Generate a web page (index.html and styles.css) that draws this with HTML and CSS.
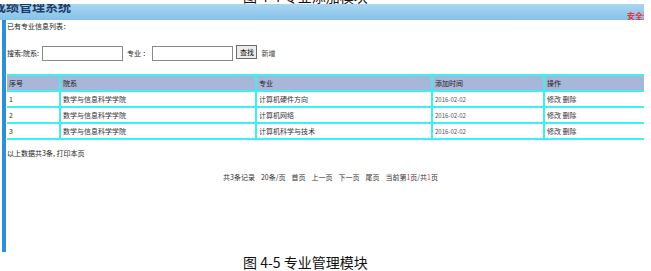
FILE: index.html
```html
<!DOCTYPE html>
<html>
<head>
<meta charset="utf-8">
<title>专业管理模块</title>
<link rel="stylesheet" href="styles.css">
</head>
<body>
  <div class="prev-caption"><div class="prev-text">图 4-4 专业添加模块</div></div>

  <div class="shot">
    <div class="topbar">
      <span class="sys-name">成绩管理系统</span>
      <span class="logout">安全退出</span>
    </div>
    <div class="main">
      <div class="list-title">已有专业信息列表：</div>

      <form class="search">
        <span>搜索:院系:</span>
        <input type="text" class="box">
        <span class="lbl">专业 ：</span>
        <input type="text" class="box">
        <button type="button" class="btn">查找</button>
        <span class="add">新增</span>
      </form>

      <table class="grid">
        <tr class="head">
          <td class="c1">序号</td>
          <td class="c2">院系</td>
          <td class="c3">专业</td>
          <td class="c4">添加时间</td>
          <td class="c5">操作</td>
        </tr>
        <tr>
          <td>1</td>
          <td>数学与信息科学学院</td>
          <td>计算机硬件方向</td>
          <td class="date">2016-02-02</td>
          <td>修改 删除</td>
        </tr>
        <tr>
          <td>2</td>
          <td>数学与信息科学学院</td>
          <td>计算机网络</td>
          <td class="date">2016-02-02</td>
          <td>修改 删除</td>
        </tr>
        <tr>
          <td>3</td>
          <td>数学与信息科学学院</td>
          <td>计算机科学与技术</td>
          <td class="date">2016-02-02</td>
          <td>修改 删除</td>
        </tr>
      </table>

      <div class="summary">以上数据共3条, 打印本页</div>

      <div class="pager">
        <span>共3条记录</span>
        <span>20条/页</span>
        <span>首页</span>
        <span>上一页</span>
        <span>下一页</span>
        <span>尾页</span>
        <span>当前第<b class="red">1</b>页/共<b class="red">1</b>页</span>
      </div>
    </div>
  </div>

  <div class="caption">图 4-5 专业管理模块</div>
</body>
</html>
```

FILE: styles.css
```css
body {
    margin: 0;
    width: 651px;
    height: 271px;
    overflow: hidden;
    background: #fff;
    font-family: "Noto Sans CJK SC", "Liberation Sans", sans-serif;
    color: #222;
}
.prev-caption {
    height: 4px;
    overflow: hidden;
    padding-left: 243px;
}
.prev-text {
    margin-top: -11px;
    font-size: 14px;
    line-height: 15px;
    color: #111;
    white-space: nowrap;
}
.shot {
    width: 644px;
    font-size: 7px;
    line-height: 9px;
}
.topbar {
    height: 16px;
    display: flex;
    justify-content: space-between;
    overflow: hidden;
    background: linear-gradient(#abd6f1, #84c2e8);
}
.sys-name {
    margin-top: -5px;
    margin-left: -7px;
    font-size: 13px;
    line-height: 14px;
    font-weight: bold;
    color: #1d3c6a;
    white-space: nowrap;
}
.logout {
    margin-top: 7px;
    width: 17px;
    font-size: 8px;
    line-height: 9px;
    font-weight: bold;
    color: #e8323c;
    white-space: nowrap;
}
.main {
    margin-left: 2px;
    height: 232px;
    border-left: 4px solid #2f8fd3;
    padding-left: 1px;
}
.list-title {
    padding-top: 2px;
    color: #222;
}
.search {
    margin: 14px 0 0;
    display: flex;
    align-items: center;
    height: 16px;
}
.search .box {
    margin: 0 0 0 3px;
    padding: 0;
    width: 79px;
    height: 13px;
    border: 1px solid #8a8a8a;
    box-sizing: content-box;
}
.search .lbl {
    margin-left: 4px;
}
.search .btn {
    margin-left: 3px;
    padding: 0;
    width: 21px;
    height: 14px;
    font-family: inherit;
    font-size: 7px;
    line-height: 10px;
    background: #ececec;
    border: 1px solid #6b6b6b;
    align-self: flex-start;
}
.search .add {
    margin-left: 4px;
    color: #444;
}
.grid {
    margin-top: 13px;
    width: 637px;
    border-collapse: collapse;
    border-top: 2px solid #3ef0f0;
}
.grid td {
    height: 14px;
    padding: 0 0 0 2px;
    border-bottom: 2px solid #3ef0f0;
    border-left: 2px solid #3ef0f0;
    color: #333;
    white-space: nowrap;
}
.grid td:first-child {
    border-left: none;
}
.grid .head td {
    background: #a8b6d8;
    color: #222;
}
.grid .c1 { width: 50px; }
.grid .c2 { width: 192px; }
.grid .c3 { width: 172px; }
.grid .c4 { width: 108px; }
.grid .date {
    color: #555;
    font-size: 6px;
}
.summary {
    margin-top: 9px;
    color: #222;
}
.pager {
    margin-top: 15px;
    padding-left: 216px;
    display: flex;
    gap: 6px;
    color: #333;
}
.pager .red {
    font-weight: normal;
    color: #e8323c;
}
.caption {
    margin-top: 3px;
    padding-left: 243px;
    font-size: 14px;
    line-height: 15px;
    color: #111;
}
```
